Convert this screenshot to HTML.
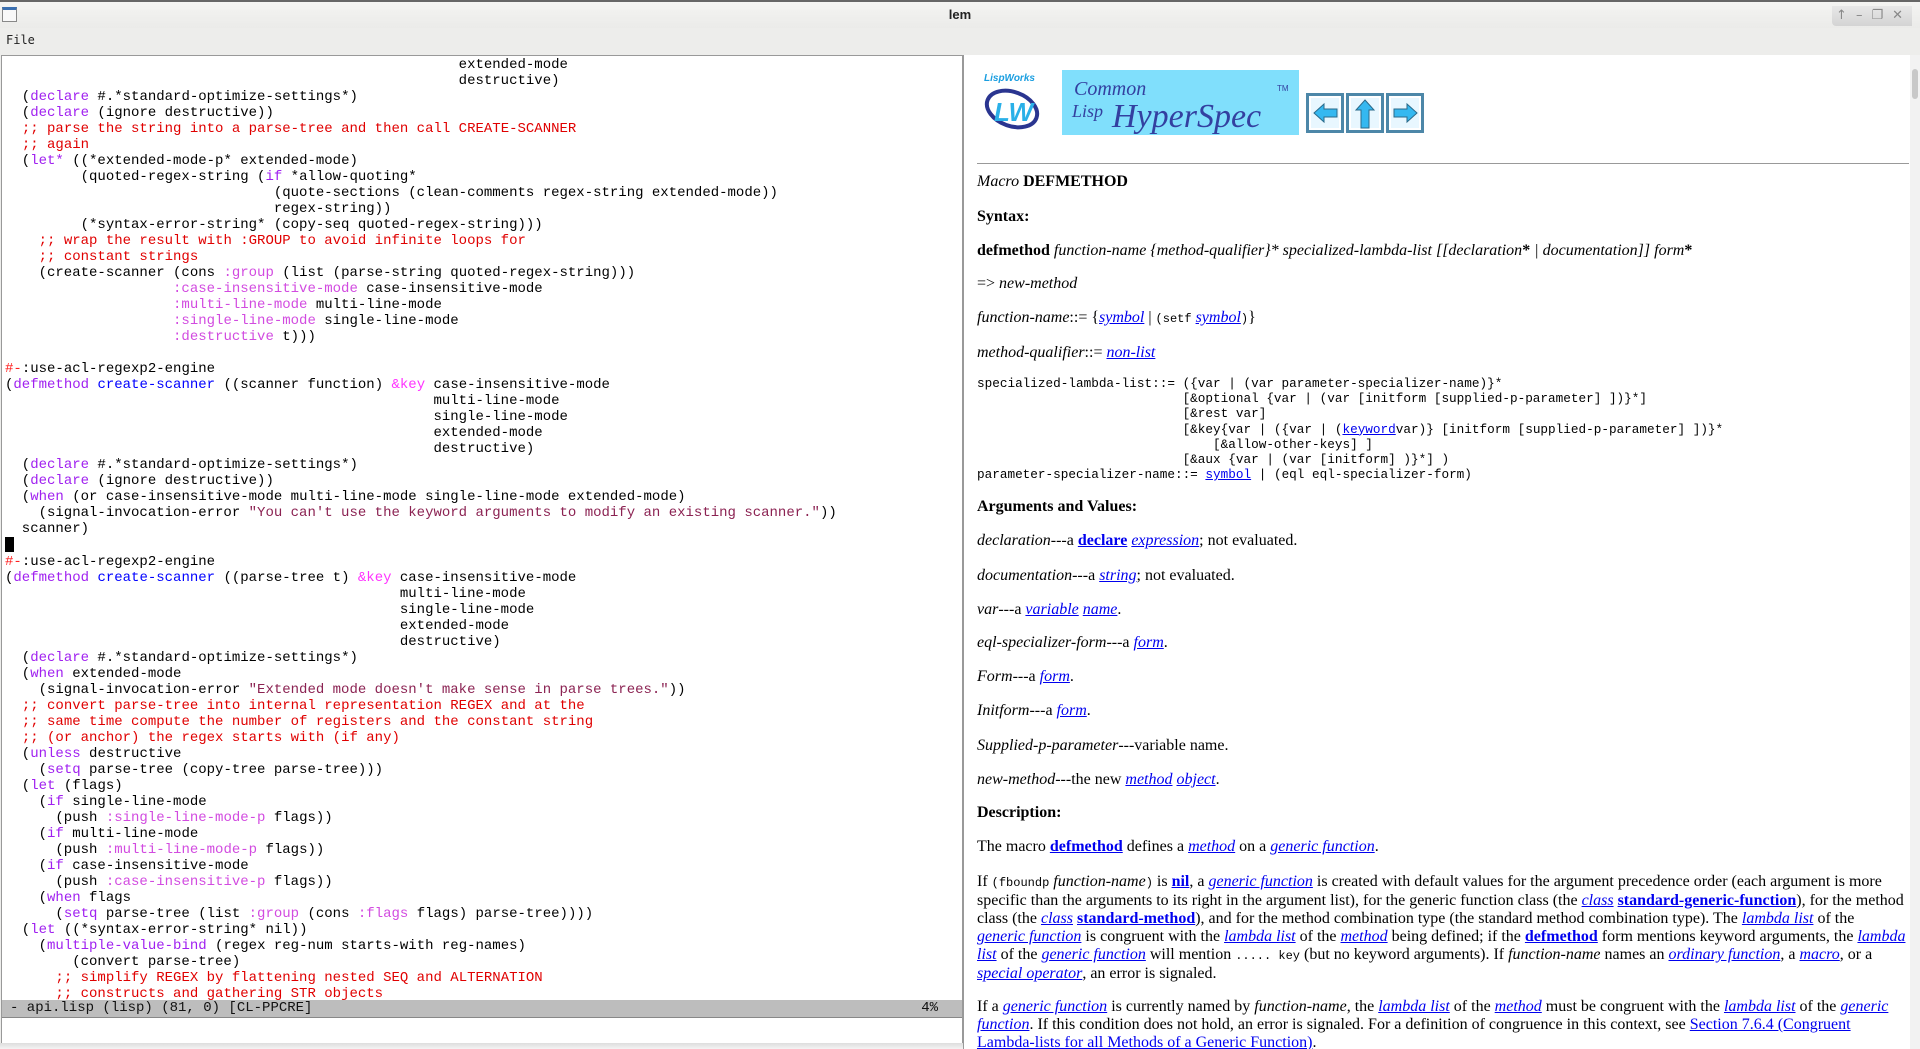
<!DOCTYPE html>
<html><head><meta charset="utf-8"><style>
*{margin:0;padding:0;box-sizing:border-box}
body{width:1920px;height:1049px;overflow:hidden;background:#ededeb;position:relative;font-family:"Liberation Sans",sans-serif}
#title{position:absolute;left:0;top:0;width:1920px;height:28px;background:linear-gradient(#f4f4f2,#ebebe9);border-top:2px solid #666;text-align:center;font:bold 13px "Liberation Sans",sans-serif;line-height:26px;color:#222}
#title .ic{position:absolute;left:2px;top:5px;width:15px;height:15px;border:1px solid #888;background:#f8f8f8;border-top:3px solid #3a6fb0}
#menu{position:absolute;left:6px;top:33px;font:12px "DejaVu Sans Mono",monospace;color:#222}
#left{position:absolute;left:1px;top:55px;width:962px;height:991px;background:#fff;border:1px solid #999}
#code{position:absolute;left:3px;top:1px;font:14px/16px "Liberation Mono",monospace;white-space:pre;color:#000}
.k{color:#a020f0}.c{color:#e00000}.s{color:#8b2252}.y{color:#d24be0}.f{color:#0000ff}.a{color:#ff33ff}.r{color:#ff2020}
#cur{display:inline-block;width:9px;height:15px;background:#000;vertical-align:-3px}
#status{position:absolute;left:0;top:944px;width:960px;height:17px;background:#bdbdbd;font:14px/17px "Liberation Mono",monospace;white-space:pre;color:#111;padding-left:8px}
#status span{position:absolute;right:24px;top:0}
#mini{position:absolute;left:0;top:961px;width:960px;height:22px;border-top:1px solid #888}
#right{position:absolute;left:963px;top:55px;width:957px;height:994px;background:#fff;border-left:1px solid #999;overflow:hidden}
#sb{position:absolute;right:0;top:0;width:10px;height:994px;background:#f2f2f2}
#sb div{position:absolute;left:2px;top:14px;width:6px;height:30px;background:#c8c8c8;border-radius:3px}
#doc{position:absolute;left:13px;top:0;width:940px;font:16px/18px "Liberation Serif",serif;color:#000}
#doc p{position:absolute;left:0;white-space:nowrap}
#doc a{color:#0000ee}
.m{font-family:"Liberation Mono",monospace;font-size:12px}
pre{font:12.7px/15.2px "Liberation Mono",monospace;position:absolute;left:0}
hr{position:absolute;left:13px;top:108px;width:932px;border:0;border-top:1px solid #999}
#shadow{position:absolute;left:0;top:1043px;width:963px;height:6px;background:linear-gradient(#ddd,#f4f4f4)}
</style></head><body>
<div id="title"><div class="ic"></div>lem
<div style="position:absolute;right:8px;top:4px;width:80px;height:20px;background:linear-gradient(#e8e8e8,#d4d4d4);border-radius:0 0 0 4px;font:13px/20px 'DejaVu Sans',sans-serif;color:#888;letter-spacing:9px;text-align:right">↑–❐✕</div></div>
<div id="menu">File</div>
<div id="left"><div id="code">                                                      extended-mode
                                                      destructive)
  (<span class="k">declare</span> #.*standard-optimize-settings*)
  (<span class="k">declare</span> (ignore destructive))
  <span class="c">;; parse the string into a parse-tree and then call CREATE-SCANNER</span>
  <span class="c">;; again</span>
  (<span class="k">let*</span> ((*extended-mode-p* extended-mode)
         (quoted-regex-string (<span class="k">if</span> *allow-quoting*
                                (quote-sections (clean-comments regex-string extended-mode))
                                regex-string))
         (*syntax-error-string* (copy-seq quoted-regex-string)))
    <span class="c">;; wrap the result with :GROUP to avoid infinite loops for</span>
    <span class="c">;; constant strings</span>
    (create-scanner (cons <span class="y">:group</span> (list (parse-string quoted-regex-string)))
                    <span class="y">:case-insensitive-mode</span> case-insensitive-mode
                    <span class="y">:multi-line-mode</span> multi-line-mode
                    <span class="y">:single-line-mode</span> single-line-mode
                    <span class="y">:destructive</span> t)))

<span class="r">#-</span>:use-acl-regexp2-engine
(<span class="k">defmethod</span> <span class="f">create-scanner</span> ((scanner function) <span class="a">&amp;key</span> case-insensitive-mode
                                                   multi-line-mode
                                                   single-line-mode
                                                   extended-mode
                                                   destructive)
  (<span class="k">declare</span> #.*standard-optimize-settings*)
  (<span class="k">declare</span> (ignore destructive))
  (<span class="k">when</span> (or case-insensitive-mode multi-line-mode single-line-mode extended-mode)
    (signal-invocation-error <span class="s">"You can't use the keyword arguments to modify an existing scanner."</span>))
  scanner)
<span id="cur"></span>
<span class="r">#-</span>:use-acl-regexp2-engine
(<span class="k">defmethod</span> <span class="f">create-scanner</span> ((parse-tree t) <span class="a">&amp;key</span> case-insensitive-mode
                                               multi-line-mode
                                               single-line-mode
                                               extended-mode
                                               destructive)
  (<span class="k">declare</span> #.*standard-optimize-settings*)
  (<span class="k">when</span> extended-mode
    (signal-invocation-error <span class="s">"Extended mode doesn't make sense in parse trees."</span>))
  <span class="c">;; convert parse-tree into internal representation REGEX and at the</span>
  <span class="c">;; same time compute the number of registers and the constant string</span>
  <span class="c">;; (or anchor) the regex starts with (if any)</span>
  (<span class="k">unless</span> destructive
    (<span class="k">setq</span> parse-tree (copy-tree parse-tree)))
  (<span class="k">let</span> (flags)
    (<span class="k">if</span> single-line-mode
      (push <span class="y">:single-line-mode-p</span> flags))
    (<span class="k">if</span> multi-line-mode
      (push <span class="y">:multi-line-mode-p</span> flags))
    (<span class="k">if</span> case-insensitive-mode
      (push <span class="y">:case-insensitive-p</span> flags))
    (<span class="k">when</span> flags
      (<span class="k">setq</span> parse-tree (list <span class="y">:group</span> (cons <span class="y">:flags</span> flags) parse-tree))))
  (<span class="k">let</span> ((*syntax-error-string* nil))
    (<span class="k">multiple-value-bind</span> (regex reg-num starts-with reg-names)
        (convert parse-tree)
      <span class="c">;; simplify REGEX by flattening nested SEQ and ALTERNATION</span>
      <span class="c">;; constructs and gathering STR objects</span></div>
<div id="status">- api.lisp (lisp) (81, 0) [CL-PPCRE]<span>4%</span></div>
<div id="mini"></div>
</div>
<div id="shadow"></div>
<div id="right">
<svg style="position:absolute;left:18px;top:14px" width="460" height="70">
<text x="2" y="12" font-family="Liberation Sans" font-weight="bold" font-style="italic" font-size="10" fill="#1a9ee0">LispWorks</text>
<ellipse cx="30" cy="40" rx="26" ry="17" fill="none" stroke="#2a3590" stroke-width="4" transform="rotate(20 30 40)"/>
<text x="12" y="52" font-family="Liberation Sans" font-weight="bold" font-style="italic" font-size="26" fill="#2ab0e8">LW</text>
<rect x="80" y="1" width="237" height="65" fill="#80dffc"/>
<text x="92" y="26" font-family="Liberation Serif" font-style="italic" font-size="20" fill="#3340a0">Common</text>
<text x="90" y="48" font-family="Liberation Serif" font-style="italic" font-size="18" fill="#3340a0">Lisp</text>
<text x="130" y="58" font-family="Liberation Serif" font-style="italic" font-size="34" fill="#3340a0">HyperSpec</text>
<text x="295" y="22" font-family="Liberation Sans" font-size="8" fill="#3340a0">TM</text>
<g transform="translate(324,24)">
<rect x="0" y="0" width="38" height="40" fill="#4d87a8"/><rect x="3" y="3" width="32" height="34" fill="#fff"/><rect x="5" y="5" width="28" height="30" fill="#e8f7ff"/>
<polygon points="8,20 18,11 18,16 31,16 31,24 18,24 18,29" fill="#35b8f0" stroke="#2a6a8a"/>
<rect x="40" y="0" width="38" height="40" fill="#4d87a8"/><rect x="43" y="3" width="32" height="34" fill="#fff"/><rect x="45" y="5" width="28" height="30" fill="#e8f7ff"/>
<polygon points="59,7 68,17 63,17 63,35 55,35 55,17 50,17" fill="#35b8f0" stroke="#2a6a8a"/>
<rect x="80" y="0" width="38" height="40" fill="#4d87a8"/><rect x="83" y="3" width="32" height="34" fill="#fff"/><rect x="85" y="5" width="28" height="30" fill="#e8f7ff"/>
<polygon points="111,20 101,11 101,16 88,16 88,24 101,24 101,29" fill="#35b8f0" stroke="#2a6a8a"/>
</g></svg>
<hr>
<div id="sb"><div></div></div>
<div id="doc">
<p style="top:118px"><i>Macro</i> <b>DEFMETHOD</b></p>
<p style="top:153px"><b>Syntax:</b></p>
<p style="top:187px"><b>defmethod</b> <i>function-name {method-qualifier}* specialized-lambda-list [[declaration</i><b>*</b> <i>| documentation]] form</i><b>*</b></p>
<p style="top:220px">=&gt; <i>new-method</i></p>
<p style="top:254px"><i>function-name</i>::= {<a href="#"><i>symbol</i></a> | <span class="m">(setf</span> <a href="#"><i>symbol</i></a><span class="m">)</span>}</p>
<p style="top:289px"><i>method-qualifier</i>::= <a href="#"><i>non-list</i></a></p>
<pre style="top:321px">specialized-lambda-list::= ({var | (var parameter-specializer-name)}*
                           [&amp;optional {var | (var [initform [supplied-p-parameter] ])}*]
                           [&amp;rest var]
                           [&amp;key{var | ({var | (<a href="#">keyword</a>var)} [initform [supplied-p-parameter] ])}*
                               [&amp;allow-other-keys] ]
                           [&amp;aux {var | (var [initform] )}*] )
parameter-specializer-name::= <a href="#">symbol</a> | (eql eql-specializer-form)</pre>
<p style="top:443px"><b>Arguments and Values:</b></p>
<p style="top:477px"><i>declaration</i>---a <a href="#"><b>declare</b></a> <a href="#"><i>expression</i></a>; not evaluated.</p>
<p style="top:512px"><i>documentation</i>---a <a href="#"><i>string</i></a>; not evaluated.</p>
<p style="top:546px"><i>var</i>---a <a href="#"><i>variable</i></a> <a href="#"><i>name</i></a>.</p>
<p style="top:579px"><i>eql-specializer-form</i>---a <a href="#"><i>form</i></a>.</p>
<p style="top:613px"><i>Form</i>---a <a href="#"><i>form</i></a>.</p>
<p style="top:647px"><i>Initform</i>---a <a href="#"><i>form</i></a>.</p>
<p style="top:682px"><i>Supplied-p-parameter</i>---variable name.</p>
<p style="top:716px"><i>new-method</i>---the new <a href="#"><i>method</i></a> <a href="#"><i>object</i></a>.</p>
<p style="top:749px"><b>Description:</b></p>
<p style="top:783px">The macro <a href="#"><b>defmethod</b></a> defines a <a href="#"><i>method</i></a> on a <a href="#"><i>generic function</i></a>.</p>
<p style="top:818px">If <span class="m">(fboundp</span> <i>function-name</i><span class="m">)</span> is <a href="#"><b>nil</b></a>, a <a href="#"><i>generic function</i></a> is created with default values for the argument precedence order (each argument is more<br>specific than the arguments to its right in the argument list), for the generic function class (the <a href="#"><i>class</i></a> <a href="#"><b>standard-generic-function</b></a>), for the method<br>class (the <a href="#"><i>class</i></a> <a href="#"><b>standard-method</b></a>), and for the method combination type (the standard method combination type). The <a href="#"><i>lambda list</i></a> of the<br><a href="#"><i>generic function</i></a> is congruent with the <a href="#"><i>lambda list</i></a> of the <a href="#"><i>method</i></a> being defined; if the <a href="#"><b>defmethod</b></a> form mentions keyword arguments, the <a href="#"><i>lambda</i></a><br><a href="#"><i>list</i></a> of the <a href="#"><i>generic function</i></a> will mention <span class="m">..... key</span> (but no keyword arguments). If <i>function-name</i> names an <a href="#"><i>ordinary function</i></a>, a <a href="#"><i>macro</i></a>, or a<br><a href="#"><i>special operator</i></a>, an error is signaled.</p>
<p style="top:943px">If a <a href="#"><i>generic function</i></a> is currently named by <i>function-name</i>, the <a href="#"><i>lambda list</i></a> of the <a href="#"><i>method</i></a> must be congruent with the <a href="#"><i>lambda list</i></a> of the <a href="#"><i>generic</i></a><br><a href="#"><i>function</i></a>. If this condition does not hold, an error is signaled. For a definition of congruence in this context, see <a href="#">Section 7.6.4 (Congruent<br>Lambda-lists for all Methods of a Generic Function)</a>.</p>
</div>
</div>
</body></html>
